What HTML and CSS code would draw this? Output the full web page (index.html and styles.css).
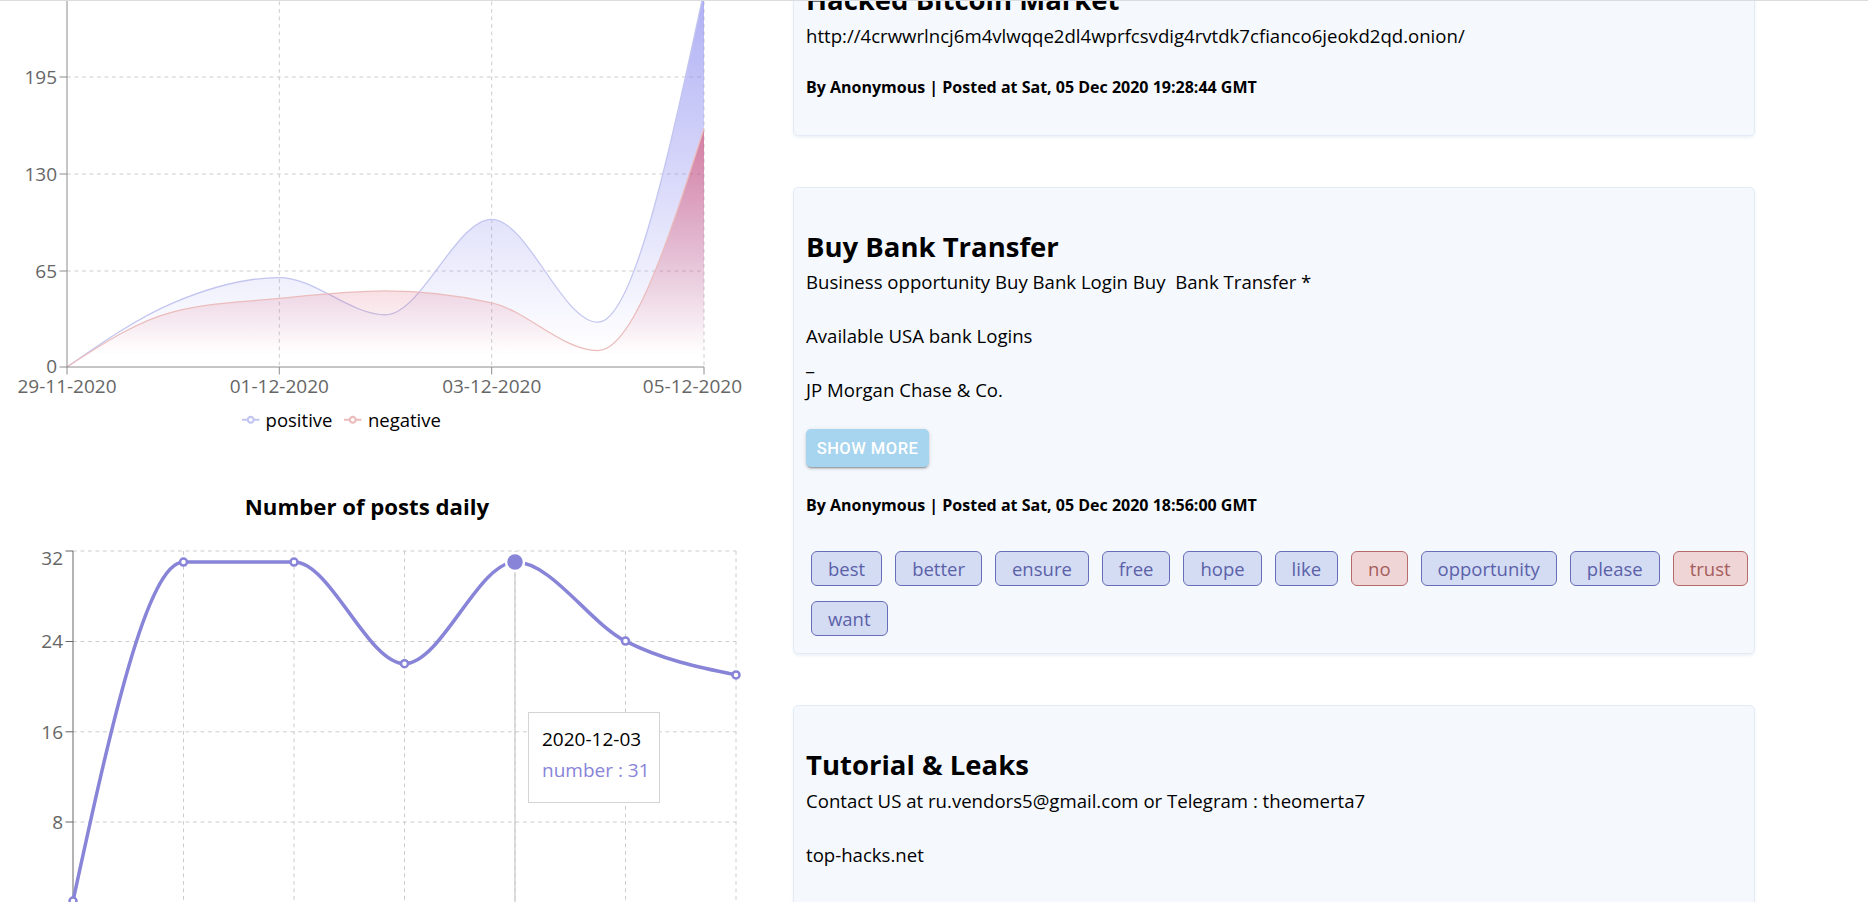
FILE: index.html
```html
<!DOCTYPE html>
<html lang="en">
<head>
<meta charset="utf-8">
<title>Dashboard</title>
<link rel="stylesheet" href="styles.css">
</head>
<body>
<div class="topline"></div>
<main class="page">
  <section class="charts">
    <svg class="chart" width="760" height="460" viewBox="0 -60 760 460">
      <defs>
        <linearGradient id="gPos" x1="0" y1="0" x2="0" y2="1">
          <stop offset="5%" stop-color="#8a8af0" stop-opacity="0.65"/>
          <stop offset="95%" stop-color="#8a8af0" stop-opacity="0"/>
        </linearGradient>
        <linearGradient id="gNeg" x1="0" y1="0" x2="0" y2="1">
          <stop offset="5%" stop-color="#d9506e" stop-opacity="0.6"/>
          <stop offset="95%" stop-color="#d9506e" stop-opacity="0"/>
        </linearGradient>
      </defs>
      <g class="grid">
        <line x1="67" y1="-21" x2="704" y2="-21"/>
        <line x1="67" y1="77" x2="704" y2="77"/>
        <line x1="67" y1="174" x2="704" y2="174"/>
        <line x1="67" y1="271" x2="704" y2="271"/>
        <line x1="279.3" y1="-21" x2="279.3" y2="367"/>
        <line x1="491.7" y1="-21" x2="491.7" y2="367"/>
        <line x1="704" y1="-21" x2="704" y2="367"/>
      </g>
      <path class="area-pos" d="M67,367 C102.39,342.36 137.78,317.72 173.17,302.8 C208.56,287.88 243.94,277.5 279.33,277.5 C314.72,277.5 350.11,314.8 385.5,314.8 C420.89,314.8 456.28,219.3 491.67,219.3 C527.06,219.3 562.44,322.2 597.83,322.2 C633.22,322.2 668.61,156.5 704,-9.1 L704,367 L67,367 Z"/>
      <path class="line-pos" d="M67,367 C102.39,342.36 137.78,317.72 173.17,302.8 C208.56,287.88 243.94,277.5 279.33,277.5 C314.72,277.5 350.11,314.8 385.5,314.8 C420.89,314.8 456.28,219.3 491.67,219.3 C527.06,219.3 562.44,322.2 597.83,322.2 C633.22,322.2 668.61,156.5 704,-9.1"/>
      <path class="area-neg" d="M67,367 C102.39,343.87 137.78,320.73 173.17,311.8 C208.56,302.87 243.94,301.88 279.33,298.4 C314.72,294.92 350.11,290.9 385.5,290.9 C420.89,290.9 456.28,294.87 491.67,302.8 C527.06,310.73 562.44,350.6 597.83,350.6 C633.22,350.6 668.61,239.4 704,128.2 L704,367 L67,367 Z"/>
      <path class="line-neg" d="M67,367 C102.39,343.87 137.78,320.73 173.17,311.8 C208.56,302.87 243.94,301.88 279.33,298.4 C314.72,294.92 350.11,290.9 385.5,290.9 C420.89,290.9 456.28,294.87 491.67,302.8 C527.06,310.73 562.44,350.6 597.83,350.6 C633.22,350.6 668.61,239.4 704,128.2"/>
      <g class="axis">
        <line x1="67" y1="-21" x2="67" y2="367"/>
        <line x1="67" y1="367" x2="704" y2="367"/>
        <line x1="59.5" y1="-21" x2="67" y2="-21"/>
        <line x1="59.5" y1="77" x2="67" y2="77"/>
        <line x1="59.5" y1="174" x2="67" y2="174"/>
        <line x1="59.5" y1="271" x2="67" y2="271"/>
        <line x1="59.5" y1="367" x2="67" y2="367"/>
        <line x1="67" y1="367" x2="67" y2="374.5"/>
        <line x1="279.3" y1="367" x2="279.3" y2="374.5"/>
        <line x1="491.7" y1="367" x2="491.7" y2="374.5"/>
        <line x1="704" y1="367" x2="704" y2="374.5"/>
      </g>
      <g class="tick-label tick-y">
        <text x="57" y="-14">260</text>
        <text x="57" y="84">195</text>
        <text x="57" y="181">130</text>
        <text x="57" y="278">65</text>
        <text x="57" y="373">0</text>
      </g>
      <g class="tick-label tick-x">
        <text x="67" y="393">29-11-2020</text>
        <text x="279.3" y="393">01-12-2020</text>
        <text x="491.7" y="393">03-12-2020</text>
        <text class="tick-end" x="742" y="393">05-12-2020</text>
      </g>
    </svg>
    <ul class="legend">
      <li class="legend-item">
        <svg class="legend-icon" viewBox="0 0 32 32"><path class="legend-pos" d="M0,16h10.6667A5.3333,5.3333,0,1,1,21.3333,16A5.3333,5.3333,0,1,1,10.6667,16M21.3333,16h10.6667"/></svg>
        <span>positive</span>
      </li>
      <li class="legend-item">
        <svg class="legend-icon" viewBox="0 0 32 32"><path class="legend-neg" d="M0,16h10.6667A5.3333,5.3333,0,1,1,21.3333,16A5.3333,5.3333,0,1,1,10.6667,16M21.3333,16h10.6667"/></svg>
        <span>negative</span>
      </li>
    </ul>
    <h3 class="chart-title">Number of posts daily</h3>
    <div class="chart2-wrap">
      <svg class="chart" width="760" height="400" viewBox="0 530 760 400">
        <g class="grid">
          <line x1="73" y1="551" x2="736" y2="551"/>
          <line x1="73" y1="641.5" x2="736" y2="641.5"/>
          <line x1="73" y1="731.8" x2="736" y2="731.8"/>
          <line x1="73" y1="822" x2="736" y2="822"/>
          <line x1="183.5" y1="551" x2="183.5" y2="912"/>
          <line x1="294" y1="551" x2="294" y2="912"/>
          <line x1="404.5" y1="551" x2="404.5" y2="912"/>
          <line x1="515" y1="551" x2="515" y2="912"/>
          <line x1="625.5" y1="551" x2="625.5" y2="912"/>
          <line x1="736" y1="551" x2="736" y2="912"/>
        </g>
        <g class="axis axis-dark">
          <line x1="73" y1="551" x2="73" y2="912"/>
          <line x1="65.5" y1="551" x2="73" y2="551"/>
          <line x1="65.5" y1="641.5" x2="73" y2="641.5"/>
          <line x1="65.5" y1="731.8" x2="73" y2="731.8"/>
          <line x1="65.5" y1="822" x2="73" y2="822"/>
        </g>
        <g class="tick-label tick-y">
          <text x="63" y="565">32</text>
          <text x="63" y="648">24</text>
          <text x="63" y="738.5">16</text>
          <text x="63" y="828.7">8</text>
        </g>
        <line class="cursor" x1="515" y1="551" x2="515" y2="912"/>
        <path class="posts-line" d="M73,901 C109.83,731.6 146.67,562.1 183.5,562.1 C220.33,562.1 257.17,562.1 294,562.1 C330.83,562.1 367.67,663.7 404.5,663.7 C441.33,663.7 478.17,562.1 515,562.1 C551.83,562.1 588.67,622.3 625.5,641.1 C662.33,659.9 699.17,667.4 736,674.9"/>
        <g class="dots">
          <circle cx="73" cy="901" r="3.5"/>
          <circle cx="183.5" cy="562.1" r="3.5"/>
          <circle cx="294" cy="562.1" r="3.5"/>
          <circle cx="404.5" cy="663.7" r="3.5"/>
          <circle cx="625.5" cy="641.1" r="3.5"/>
          <circle cx="736" cy="674.9" r="3.5"/>
        </g>
        <circle class="active-dot" cx="515" cy="562.1" r="9"/>
      </svg>
      <div class="tooltip">
        <p class="tooltip-label">2020-12-03</p>
        <p class="tooltip-value">number : 31</p>
      </div>
    </div>
  </section>

  <section class="posts">
    <article class="card">
      <h2 class="card-title">Hacked Bitcoin Market</h2>
      <p class="card-body">http://4crwwrlncj6m4vlwqqe2dl4wprfcsvdig4rvtdk7cfianco6jeokd2qd.onion/</p>
      <p class="byline">By Anonymous | Posted at Sat, 05 Dec 2020 19:28:44 GMT</p>
    </article>

    <article class="card">
      <h2 class="card-title">Buy Bank Transfer</h2>
      <p class="card-body">Business opportunity Buy Bank Login Buy  Bank Transfer *

Available USA bank Logins
_
JP Morgan Chase &amp; Co.</p>
      <button class="btn-more" type="button">Show more</button>
      <p class="byline">By Anonymous | Posted at Sat, 05 Dec 2020 18:56:00 GMT</p>
      <div class="tags">
        <span class="tag">best</span>
        <span class="tag">better</span>
        <span class="tag">ensure</span>
        <span class="tag">free</span>
        <span class="tag">hope</span>
        <span class="tag">like</span>
        <span class="tag tag-neg">no</span>
        <span class="tag">opportunity</span>
        <span class="tag">please</span>
        <span class="tag tag-neg">trust</span>
        <span class="tag">want</span>
      </div>
    </article>

    <article class="card">
      <h2 class="card-title">Tutorial &amp; Leaks</h2>
      <p class="card-body card-body-tail">Contact US at ru.vendors5@gmail.com or Telegram : theomerta7

top-hacks.net</p>
      <p class="byline">By Anonymous | Posted at Sat, 05 Dec 2020 18:40:12 GMT</p>
    </article>
  </section>
</main>
</body>
</html>
```

FILE: styles.css
```css
html, body {
  margin: 0;
  padding: 0;
  overflow: hidden;
  background: #fff;
}

body {
  font-family: "Open Sans", "Noto Sans", sans-serif;
  color: #000;
}

.topline {
  position: fixed;
  top: 0;
  left: 0;
  right: 0;
  height: 1px;
  background: #dadce0;
  z-index: 10;
}

.page {
  display: grid;
  grid-template-columns: 760px 962px;
  column-gap: 33px;
  align-items: start;
  margin-top: -60px;
}

/* ---------- charts ---------- */
.charts {
  display: flex;
  flex-direction: column;
}

.chart {
  display: block;
  overflow: visible;
}

.grid line {
  stroke: #ccc;
  stroke-width: 1;
  stroke-dasharray: 3.75 3.75;
}

.axis line {
  stroke: #8c8c8c;
  stroke-width: 1;
}

.axis-dark line {
  stroke: #666;
}

.tick-label text {
  font-family: "Open Sans", sans-serif;
  font-size: 19px;
  fill: #666;
}

.tick-y text {
  text-anchor: end;
}

.tick-x text {
  text-anchor: middle;
}

.tick-x .tick-end {
  text-anchor: end;
}

.area-pos {
  fill: url(#gPos);
  stroke: none;
}

.line-pos {
  fill: none;
  stroke: #c2c5ef;
  stroke-width: 1.25;
}

.area-neg {
  fill: url(#gNeg);
  stroke: none;
}

.line-neg {
  fill: none;
  stroke: #ebbcbc;
  stroke-width: 1.25;
}

.legend {
  list-style: none;
  margin: 0;
  padding: 0;
  width: 683px;
  height: 40px;
  display: flex;
  justify-content: center;
  align-items: center;
  gap: 12px;
  font-size: 18.5px;
  line-height: 40px;
}

.legend-item {
  display: flex;
  align-items: center;
  gap: 6px;
}

.legend-icon {
  width: 17.5px;
  height: 17.5px;
  display: block;
}

.legend-icon path {
  fill: none;
  stroke-width: 4;
}

.legend-pos {
  stroke: #c2c5ef;
}

.legend-neg {
  stroke: #ebbcbc;
}

.chart-title {
  margin: 0;
  width: 734px;
  height: 90px;
  box-sizing: border-box;
  padding-top: 52px;
  font-size: 22.2px;
  line-height: 30px;
  font-weight: 700;
  text-align: center;
}

.chart2-wrap {
  position: relative;
  width: 760px;
  height: 400px;
}

.cursor {
  stroke: #ccc;
  stroke-width: 1.25;
}

.posts-line {
  fill: none;
  stroke: #8884d8;
  stroke-width: 3.5;
}

.dots circle {
  fill: #fff;
  stroke: #8884d8;
  stroke-width: 2.5;
}

.active-dot {
  fill: #8884d8;
  stroke: #fff;
  stroke-width: 2.5;
}

.tooltip {
  position: absolute;
  left: 528px;
  top: 182px;
  width: 132px;
  height: 91px;
  box-sizing: border-box;
  padding: 11px 13px 0;
  background: #fff;
  border: 1px solid #d4d4d4;
  font-size: 19px;
  line-height: 31px;
  white-space: nowrap;
}

.tooltip p {
  margin: 0;
}

.tooltip-label {
  color: #000;
}

.tooltip-value {
  color: #8884d8;
}

/* ---------- posts ---------- */
.posts {
  display: flex;
  flex-direction: column;
  gap: 51px;
}

.card {
  background: #f5f9fe;
  border: 1px solid #e3ecf6;
  border-radius: 5px;
  box-shadow: 0 2px 3px rgba(40, 90, 150, 0.08);
  padding: 42px 12px 17px;
}

.card-title {
  margin: 0;
  font-size: 27.5px;
  line-height: 33px;
  font-weight: 700;
}

.card-body {
  margin: 5.5px 0 0;
  font-size: 18.6px;
  line-height: 27px;
  white-space: pre-wrap;
}

.card-body-tail {
  padding-bottom: 54px;
}

.btn-more {
  display: block;
  margin-top: 26px;
  width: 123px;
  height: 38px;
  padding: 0;
  border: 0;
  border-radius: 5px;
  background: #a7d4ee;
  color: #fff;
  font-family: Roboto, "Open Sans", sans-serif;
  font-weight: 500;
  font-size: 16.5px;
  letter-spacing: 0.5px;
  text-transform: uppercase;
  box-shadow: 0 3px 1px -2px rgba(0, 0, 0, 0.2), 0 2px 2px 0 rgba(0, 0, 0, 0.14), 0 1px 5px 0 rgba(0, 0, 0, 0.12);
}

.byline {
  margin: 26px 0 19px;
  font-size: 16px;
  line-height: 24px;
  font-weight: 700;
}

.tags {
  display: flex;
  flex-wrap: wrap;
  gap: 15px 13px;
  margin: 34px -20px 0 5px;
}

.tag {
  display: flex;
  align-items: center;
  height: 35px;
  box-sizing: border-box;
  padding: 0 16px;
  border: 1px solid #676db6;
  border-radius: 6px;
  background: #d4dcf3;
  color: #5b61a9;
  font-size: 18.5px;
}

.tag-neg {
  border-color: #b56a6a;
  background: #f0d5d7;
  color: #a55d5d;
}
```
